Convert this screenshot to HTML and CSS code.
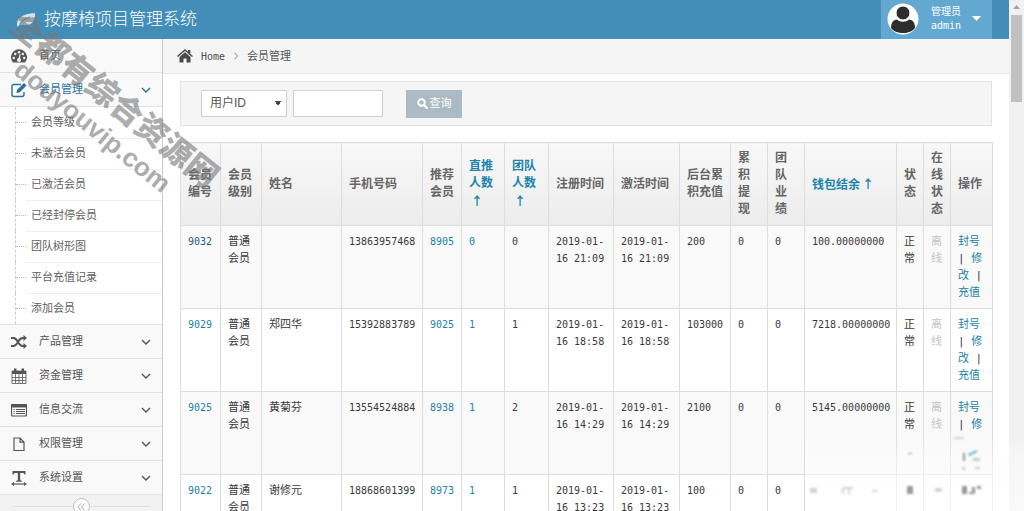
FILE: index.html
```html
<!DOCTYPE html>
<html lang="zh-CN">
<head>
<meta charset="utf-8">
<title>按摩椅项目管理系统</title>
<link rel="stylesheet" href="styles.css">
</head>
<body>
<svg class="defs" aria-hidden="true">
  <symbol id="chev" viewBox="0 0 10 6"><path d="M1 1l4 4 4-4" fill="none" stroke="currentColor" stroke-width="1.4"/></symbol>
</svg>
<div class="app">
  <div class="page">
    <header class="navbar">
      <a class="brand" href="#">
        <svg width="20" height="16" viewBox="0 0 20 16"><path d="M1 14C0 6 6 2 19 1c1 8-4 13-11 12-2 0-3-1-4-1l-2 3z" fill="#d5e3e8"/><path d="M4 12C7 7 10 6 14 5" fill="none" stroke="#6fa6c4" stroke-width="1.5"/></svg>
        <span>按摩椅项目管理系统</span>
      </a>
      <button class="user" type="button">
        <svg class="avatar" width="32" height="32" viewBox="0 0 32 32"><circle cx="16" cy="16" r="15.5" fill="#fff"/><path d="M10 16.500C6 17 4 20 4 25c2 3 7 5 12 5s10-2 12-5c0-5-2-8-6-8.500-3 3-9 3-12 0z" fill="#2d2d2d"/><circle cx="16" cy="10" r="7" fill="#2d2d2d" stroke="#fff"/></svg>
        <span class="who">管理员<br>admin</span>
        <svg width="9" height="5" viewBox="0 0 9 5"><path d="M0 0h9L4.500 5z" fill="#fff"/></svg>
      </button>
    </header>
    <div class="body">
      <nav class="sidebar">
        <a class="item" href="#"><svg class="ico" viewBox="0 0 16 16"><path d="M2 14.500A8 8 0 1 1 14 14.500z" fill="#555"/><g fill="#f8f8f8"><circle cx="2.800" cy="10" r="1.200"/><circle cx="4.300" cy="6" r="1.200"/><circle cx="8" cy="4.200" r="1.200"/><circle cx="11.800" cy="6" r="1.200"/><circle cx="13.200" cy="10" r="1.200"/><circle cx="8" cy="12" r="2"/><path d="M7.500 11l1-5 1 .3-.6 5z"/></g></svg><span>首页</span></a>
        <a class="item active" href="#"><svg class="ico" viewBox="0 0 16 16"><path d="M10 2.500H3Q1 2.500 1 4.500v8q0 2 2 2h8q2 0 2-2V10" fill="none" stroke="currentColor" stroke-width="1.400"/><path d="M6 8l7-7 2.500 2.500-7 7L5.500 11z" fill="currentColor"/></svg><span>会员管理</span><svg class="chev"><use href="#chev"/></svg></a>
        <ul class="sub">
          <li><a href="#">会员等级</a></li>
          <li><a href="#">未激活会员</a></li>
          <li><a href="#">已激活会员</a></li>
          <li><a href="#">已经封停会员</a></li>
          <li><a href="#">团队树形图</a></li>
          <li><a href="#">平台充值记录</a></li>
          <li><a href="#">添加会员</a></li>
        </ul>
        <a class="item" href="#"><svg class="ico" viewBox="0 0 16 16"><path d="M0 4h2.500C7 4 7 12 11.500 12H13M0 12h2.500C7 12 7 4 11.500 4H13" fill="none" stroke="currentColor" stroke-width="1.900"/><path d="M12.500 1l3.500 3-3.500 3zM12.500 9l3.500 3-3.500 3z" fill="currentColor"/></svg><span>产品管理</span><svg class="chev"><use href="#chev"/></svg></a>
        <a class="item" href="#"><svg class="ico" viewBox="0 0 16 16"><path d="M1 3h14v12.500H1zM1 9.500h14M1 12.500h14M4.500 6v9.500M8 6v9.500M11.500 6v9.500" fill="none" stroke="currentColor" stroke-width=".8"/><path d="M1 3h14v3H1zM3 .5h2.500V5H3zM10.500.5H13V5h-2.500z" fill="currentColor"/></svg><span>资金管理</span><svg class="chev"><use href="#chev"/></svg></a>
        <a class="item" href="#"><svg class="ico" viewBox="0 0 16 16"><rect x=".5" y="2.500" width="15" height="11.500" rx="1" fill="none" stroke="currentColor" stroke-width="1.200"/><path d="M.5 2.500h15V5.500H.5z" fill="currentColor"/><path d="M2.500 7.500h1.200M5 7.500h9M2.500 9.500h1.200M5 9.500h9M2.500 11.500h1.200M5 11.500h9" stroke="currentColor"/></svg><span>信息交流</span><svg class="chev"><use href="#chev"/></svg></a>
        <a class="item" href="#"><svg class="ico" viewBox="0 0 16 16"><path d="M3 2h6l4 4v8.500H3zM9 2v4.200h4" fill="none" stroke="currentColor" stroke-width="1.200"/></svg><span>权限管理</span><svg class="chev"><use href="#chev"/></svg></a>
        <a class="item" href="#"><svg class="ico" viewBox="0 0 16 16"><path d="M1.500 1h13v3.500h-1L12.500 3H9.200v7.300l1.800.7v.8H5V11l1.800-.7V3H3.500l-1 1.500h-1z" fill="currentColor"/><path d="M2 14h12" stroke="currentColor" stroke-width="1.200"/><path d="M0 14l3-2v4zM16 14l-3-2v4z" fill="currentColor"/></svg><span>系统设置</span><svg class="chev"><use href="#chev"/></svg></a>
        <div class="collapse"><button type="button" aria-label="收起"><svg width="8" height="8" viewBox="0 0 8 8"><path d="M4 .5L1 4l3 3.500M7.500.5l-3 3.500 3 3.500" fill="none" stroke="#aaa"/></svg></button></div>
      </nav>
      <main class="main">
        <div class="crumbs">
          <svg width="16" height="14" viewBox="0 0 16 14"><path d="M8 0l3 2.700V1h2.300v3.700L16 7l-1 1-7-6-7 6-1-1z" fill="#4a4a4a"/><path d="M8 3.300L13.500 8v5.500H9.500v-4h-3v4h-4V8z" fill="#4a4a4a"/></svg>
          <a class="lat" href="#">Home</a>
          <svg width="6" height="8" viewBox="0 0 6 8"><path d="M1.500 .5L4.500 4l-3 3.500" fill="none" stroke="#b2b6bf" stroke-width="1.300"/></svg>
          <span>会员管理</span>
        </div>
        <div class="content">
          <form class="filter">
            <select aria-label="查询字段"><option>用户ID</option></select>
            <input type="text" aria-label="关键字">
            <button type="button"><svg width="11" height="11" viewBox="0 0 11 11"><circle cx="4.500" cy="4.500" r="3.300" fill="none" stroke="#fff" stroke-width="2"/><path d="M7 7l3 3" stroke="#fff" stroke-width="2.200" stroke-linecap="round"/></svg>查询</button>
          </form>
          <table>
            <colgroup><col class="w40"><col class="w41"><col class="w80"><col class="w81"><col class="w39"><col class="w43"><col class="w44"><col class="w65"><col class="w66"><col class="w51"><col class="w37"><col class="w37"><col class="w92"><col class="w27"><col class="w27"><col class="w42"></colgroup>
            <thead><tr><th>会员编号</th><th>会员级别</th><th>姓名</th><th>手机号码</th><th>推荐会员</th><th><a href="#">直推人数<span class="up">↑</span></a></th><th><a href="#">团队人数<span class="up">↑</span></a></th><th>注册时间</th><th>激活时间</th><th>后台累积充值</th><th>累积提现</th><th>团队业绩</th><th><a href="#">钱包结余<span class="up">↑</span></a></th><th>状态</th><th>在线状态</th><th>操作</th></tr></thead>
            <tbody>
              <tr><td><a class="dark" href="#">9032</a></td><td class="cn">普通会员</td><td class="cn"></td><td>13863957468</td><td><a href="#">8905</a></td><td><a href="#">0</a></td><td>0</td><td>2019-01-16 21:09</td><td>2019-01-16 21:09</td><td>200</td><td>0</td><td>0</td><td>100.00000000</td><td class="cn">正常</td><td class="cn off">离线</td><td class="cn"><a href="#">封号</a> | <a href="#">修改</a> | <a href="#">充值</a></td></tr>
              <tr><td><a href="#">9029</a></td><td class="cn">普通会员</td><td class="cn">郑四华</td><td>15392883789</td><td><a href="#">9025</a></td><td><a href="#">1</a></td><td>1</td><td>2019-01-16 18:58</td><td>2019-01-16 18:58</td><td>103000</td><td>0</td><td>0</td><td>7218.00000000</td><td class="cn">正常</td><td class="cn off">离线</td><td class="cn"><a href="#">封号</a> | <a href="#">修改</a> | <a href="#">充值</a></td></tr>
              <tr><td><a href="#">9025</a></td><td class="cn">普通会员</td><td class="cn">黄菊芬</td><td>13554524884</td><td><a href="#">8938</a></td><td><a href="#">1</a></td><td>2</td><td>2019-01-16 14:29</td><td>2019-01-16 14:29</td><td>2100</td><td>0</td><td>0</td><td>5145.00000000</td><td class="cn">正常</td><td class="cn off">离线</td><td class="cn"><a href="#">封号</a> | <a href="#">修</a></td></tr>
              <tr><td><a href="#">9022</a></td><td class="cn">普通会员</td><td class="cn">谢修元</td><td>18868601399</td><td><a href="#">8973</a></td><td><a href="#">1</a></td><td>1</td><td>2019-01-16 13:23</td><td>2019-01-16 13:23</td><td>100</td><td>0</td><td>0</td><td></td><td></td><td></td><td></td></tr>
            </tbody>
          </table>
        </div>
      </main>
    </div>
  </div>
  <div class="scroll"><svg width="7" height="4" viewBox="0 0 7 4"><path d="M3.500 0L7 4H0z" fill="#a3a3a3"/></svg><div class="thumb"></div></div>
  <div class="mark mark-cn">全都有综合资源网</div>
  <div class="mark mark-en">douyouvip.com</div>
  <svg class="smudge" width="219" height="76" viewBox="0 0 219 76">
    <defs><linearGradient id="haze" x2="0" y2="1"><stop offset="0" stop-color="#fff" stop-opacity="0"/><stop offset=".4" stop-color="#fffdfd" stop-opacity=".5"/><stop offset="1" stop-color="#fff" stop-opacity=".6"/></linearGradient><filter id="soft"><feGaussianBlur stdDeviation=".8"/></filter></defs>
    <path d="M0 0h219v76H0z" fill="url(#haze)"/>
    <g filter="url(#soft)"><path d="M5 53h7v5H5zM37 52h11v2H37zM37 54h2v5h-2zM43 54h2v5h-2zM67 55h5v2h-5zM130 53h7v4h-7zM149 2h10v2h-10z" fill="#d4d4d4"/><path d="M102 51h6v8h-6zM103 18h4v1h-4zM157 51h5v8h-5zM167 52h3v7h-6v-2h3zM172 51h4v3h-4zM158 18h2v8h-2z" fill="#999"/><path d="M163 19l9-4v2l-8 4z" fill="#5fb9b9"/><path d="M168 23h7v3h-7zM157 32h3v3h-3zM170 32h5v2h-5z" fill="#c3cfcf"/></g>
  </svg>
</div>
</body>
</html>
```
FILE: styles.css
```css
* { box-sizing: border-box; }
body {
  margin: 0;
  font: 11px/17px "Liberation Sans", "Noto Sans CJK SC", sans-serif;
  color: #393939;
  background: #fff;
}
a { color: #2283a8; text-decoration: none; }
button, input, select { font: inherit; border-radius: 0; }
.defs { position: absolute; width: 0; height: 0; }
.app { position: relative; display: flex; height: 100vh; overflow: hidden; }
.page { flex: 1; min-width: 0; display: flex; flex-direction: column; }

.navbar {
  display: flex;
  justify-content: space-between;
  height: 39px;
  flex: none;
  padding: 0 17px 0 16px;
  background: #438eb9;
}
.brand { display: flex; align-items: center; gap: 8px; color: #fff; font-size: 17px; font-weight: 300; }
.user {
  display: flex;
  align-items: center;
  width: 111px;
  padding: 0 0 2px 6px;
  border: 0;
  background: #62a8d1;
  color: #fff;
  text-align: left;
}
.who {
  flex: 1;
  padding-left: 12px;
  font: 10px/14px "DejaVu Sans Mono", "Noto Sans CJK SC", monospace;
}
.user svg:last-child { margin-right: 11px; }

.body { flex: 1; min-height: 0; display: flex; }
.sidebar { width: 163px; flex: none; border-right: 1px solid #ccc; background: #f2f2f2; }
.item {
  display: flex;
  align-items: center;
  height: 34px;
  padding: 0 11px;
  gap: 12px;
  border-bottom: 1px solid #e2e2e2;
  background: #f9f9f9;
  color: #555;
}
.item span { flex: 1; }
.item.active { color: #2b6f9e; }
.ico { width: 16px; height: 16px; }
.chev { width: 10px; height: 6px; }
.sub { margin: 0; padding: 0 0 0 15px; list-style: none; background: #fff; border-bottom: 1px solid #e2e2e2; }
.sub li { display: flex; align-items: center; border-left: 1px dashed #ccc; }
.sub li::before { content: ""; width: 10px; border-top: 1px dotted #bbb; }
.sub a { flex: 1; padding: 6px 5px 7px; border-top: 1px solid #efefef; color: #616161; }
.sub li:first-child a { border-color: #fff; }
.collapse {
  display: flex;
  align-items: center;
  justify-content: center;
  padding: 3px 12px;
}
.collapse::before, .collapse::after { content: ""; flex: 1; border-top: 1px solid #e0e0e0; }
.collapse button {
  display: flex;
  align-items: center;
  justify-content: center;
  width: 17px;
  height: 17px;
  padding: 0;
  border: 1px solid #bbb;
  border-radius: 50%;
  background: #fff;
}

.main { flex: 1; min-width: 0; overflow: hidden; }
.crumbs {
  display: flex;
  align-items: center;
  gap: 8px;
  height: 35px;
  padding: 0 14px;
  border-bottom: 1px solid #e5e5e5;
  background: #f5f5f5;
  color: #555;
}
.crumbs a { color: #4c4c4c; }
.lat { font: 10px/17px "DejaVu Sans Mono", monospace; }
.content { padding: 7px 17px 0; }
.filter {
  display: flex;
  align-items: center;
  height: 45px;
  margin-bottom: 16px;
  padding: 0 20px;
  border: 1px solid #e3e3e3;
  background: #f5f5f5;
}
.filter select, .filter input { height: 27px; border: 1px solid #d0d0d0; color: #555; }
.filter select {
  width: 86px;
  padding: 0 8px;
  font-size: 12px;
  appearance: none;
  background: #fff conic-gradient(from -31deg at 50% 100%, #444 62deg, transparent 0) no-repeat right 5px center / 6px 5px;
}
.filter input { width: 90px; margin-left: 6px; background: #fff; }
.filter button {
  display: flex;
  align-items: center;
  justify-content: center;
  gap: 2px;
  width: 56px;
  height: 28px;
  margin-left: 23px;
  padding: 0;
  border: 0;
  background: #abbac3;
  color: #fff;
}
.filter select { background-image: conic-gradient(from 329deg at 50% 0, transparent 0), linear-gradient(to bottom right, #444 50%, transparent 50%), linear-gradient(to bottom left, #444 50%, transparent 50%); background-size: 0 0, 3px 5px, 3px 5px; background-position: 0 0, right 5px center, right 8px center; }

table { width: 100%; table-layout: fixed; border-collapse: collapse; font: 10px/17px "DejaVu Sans Mono", "Noto Sans CJK SC", monospace; }
th, td { height: 83px; padding: 7px 6px 7px 7px; border: 1px solid #ddd; text-align: left; }
th { font-size: 12px; color: #666; background: linear-gradient(#f8f8f8, #ececec); }
th a { color: #1c84ad; }
.up { padding-left: 2px; font-family: "Noto Sans CJK SC", sans-serif; }
td { vertical-align: top; }
.cn { font-size: 11px; }
tbody tr:nth-child(odd) { background: #f9f9f9; }
.dark { color: #1f5c85; }
.off { color: #c4c4c4; }
.w27 { width: 27px; }
.w37 { width: 37px; }
.w39 { width: 39px; }
.w40 { width: 40px; }
.w41 { width: 41px; }
.w42 { width: 42px; }
.w43 { width: 43px; }
.w44 { width: 44px; }
.w51 { width: 51px; }
.w65 { width: 65px; }
.w66 { width: 66px; }
.w80 { width: 80px; }
.w81 { width: 81px; }
.w92 { width: 92px; }

.scroll { display: flex; flex-direction: column; align-items: center; gap: 6px; width: 15px; padding-top: 5px; background: #f1f1f1; }
.thumb { width: 11px; height: 87px; background: #c1c1c1; }

.mark {
  position: absolute;
  transform-origin: 0 50%;
  transform: rotate(39deg);
  white-space: nowrap;
  font-weight: 900;
  color: rgba(118, 118, 118, .62);
  pointer-events: none;
}
.mark-cn { left: 15px; top: 2px; font-size: 32px; line-height: 36px; }
.mark-en { left: 18px; top: 50px; font-size: 26px; line-height: 32px; }
.smudge { position: absolute; right: 0; bottom: 0; pointer-events: none; }
```
